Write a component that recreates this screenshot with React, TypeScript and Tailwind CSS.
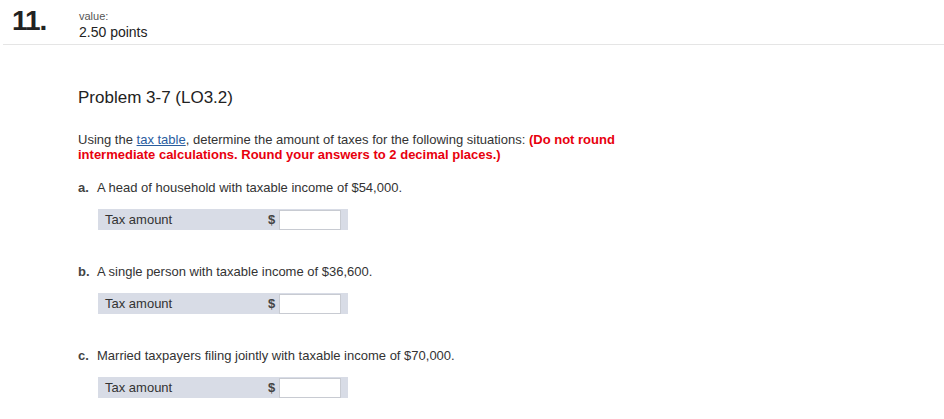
import React from 'react';

const parts = [
  { label: 'a.', text: 'A head of household with taxable income of $54,000.' },
  { label: 'b.', text: 'A single person with taxable income of $36,600.' },
  { label: 'c.', text: 'Married taxpayers filing jointly with taxable income of $70,000.' },
];

export default function App() {
  return (
    <div className="w-[944px] h-[419px] overflow-hidden bg-white text-[#333] font-['Liberation_Sans',Arial,sans-serif]">
      {/* Header */}
      <div className="ml-[3px] flex items-start border-b border-[#e5e5e5] h-[45px]">
        <div className="w-[76px] pl-[9px] pt-[5px] text-[28px] leading-[32px] font-bold text-[#222] tracking-[-1px]">11.</div>
        <div className="pt-[10px]">
          <div className="text-[11px] leading-[12px] text-[#555]">value:</div>
          <div className="text-[14px] leading-[17px] mt-[2px] text-[#222]">2.50 points</div>
        </div>
      </div>

      <div className="pl-[78px]">
        <h2 className="mt-[43px] text-[17px] leading-[20px] text-[#222]">Problem 3-7 (LO3.2)</h2>

        <p className="mt-[24px] text-[13px] leading-[15px] w-[560px]">
          Using the <span className="text-[#2a5d9f] underline">tax table</span>, determine the amount of taxes for the following situations:{' '}
          <span className="text-[#e8000d] font-bold">(Do not round intermediate calculations. Round your answers to 2 decimal places.)</span>
        </p>

        {parts.map((p, i) => (
          <div key={p.label} className={i === 0 ? 'mt-[18px]' : 'mt-[34px]'}>
            <div className="flex text-[13px] leading-[15px]">
              <span className="w-[19px] font-bold text-[#444]">{p.label}</span>
              <span>{p.text}</span>
            </div>
            <div className="ml-[20px] mt-[14px] w-[250px] h-[21px] bg-[#d8dce6] flex items-center">
              <span className="pl-[7px] w-[170px] text-[13px]">Tax amount</span>
              <span className="text-[13px] font-bold text-[#444] w-[11px]">$</span>
              <div className="w-[62px] h-[20px] bg-white border border-[#c8cbd2]" />
            </div>
          </div>
        ))}
      </div>
    </div>
  );
}
